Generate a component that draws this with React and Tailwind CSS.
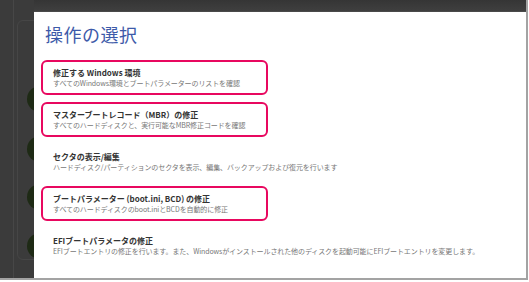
// App.jsx
const items = [
  { title: "修正する Windows 環境", sub: "すべてのWindows環境とブートパラメーターのリストを確認", boxed: true },
  { title: "マスターブートレコード（MBR）の修正", sub: "すべてのハードディスクと、実行可能なMBR修正コードを確認", boxed: true },
  { title: "セクタの表示/編集", sub: "ハードディスク/パーティションのセクタを表示、編集、バックアップおよび復元を行います", boxed: false },
  { title: "ブートパラメーター (boot.ini, BCD) の修正", sub: "すべてのハードディスクのboot.iniとBCDを自動的に修正", boxed: true },
  {
    title: "EFIブートパラメータの修正",
    sub: "EFIブートエントリの修正を行います。また、Windowsがインストールされた他のディスクを起動可能にEFIブートエントリを変更します。",
    boxed: false,
  },
];

const App = () => {
  return (
    <div className="w-[529px] h-[282px] bg-white overflow-hidden" style={{ fontFamily: '"Noto Sans CJK JP", "Noto Sans", sans-serif' }}>
      <div className="w-[528px] h-[280px] border-r-2 border-b-2 border-[#a3a3a3] bg-[#3b3b3b] flex">
        {/* Left background strip */}
        <div className="w-[34px] h-full relative overflow-hidden shrink-0">
          <div className="absolute left-[13px] top-0 h-full w-px bg-[#474747]" />
          <div className="absolute left-[17px] top-[20px] w-[40px] h-[240px] rounded-md border border-[#464646]" />
          <div className="absolute left-[27px] top-[86px] w-[26px] h-[26px] rounded-full bg-[#1e2a15]" />
          <div className="absolute left-[27px] top-[136px] w-[26px] h-[26px] rounded-full bg-[#1e2a15]" />
          <div className="absolute left-[27px] top-[184px] w-[26px] h-[26px] rounded-full bg-[#1e2a15]" />
          <div className="absolute left-[27px] top-[233px] w-[26px] h-[26px] rounded-full bg-[#1e2a15]" />
        </div>

        {/* Right side */}
        <div className="flex-1 flex flex-col">
          <div className="h-[12px] bg-gradient-to-b from-[#353535] to-[#3f3f3f] border-b border-[#4a4a4a]" />
          <div className="flex-1 bg-white pl-[7px] pt-[10px]">
            <h1 className="pl-[4px] text-[18px] leading-[24px] text-[#3d5aa9] tracking-[0.5px]">操作の選択</h1>
            <div className="mt-[14px] flex flex-col gap-[7px]">
              {items.map((it) => (
                <div
                  key={it.title}
                  className={
                    it.boxed
                      ? "w-[227px] h-[35px] rounded-[6px] border-2 border-[#e8085f] pl-[10px] flex flex-col justify-center"
                      : "w-[227px] h-[35px] rounded-[6px] border-2 border-transparent pl-[10px] flex flex-col justify-center"
                  }
                >
                  <div className="text-[8px] leading-[10px] font-bold text-[#333] whitespace-nowrap">{it.title}</div>
                  <div className="text-[7px] leading-[10px] text-[#777] tracking-[-0.1px] whitespace-nowrap">{it.sub}</div>
                </div>
              ))}
            </div>
          </div>
        </div>
      </div>
    </div>
  );
};

export default App;
